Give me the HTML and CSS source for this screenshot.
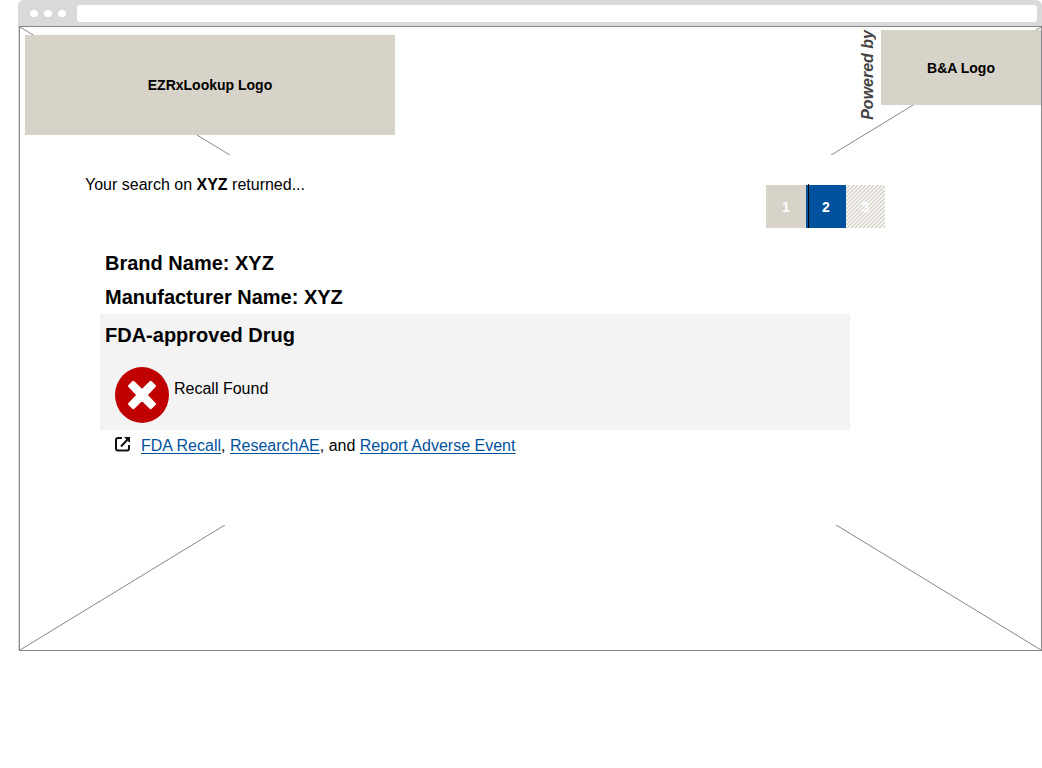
FILE: index.html
```html
<!DOCTYPE html>
<html lang="en">
<head>
<meta charset="utf-8">
<title>EZRxLookup</title>
<link rel="stylesheet" href="styles.css">
</head>
<body>
<div class="browser">
  <div class="browser-bar">
    <span class="dot"></span><span class="dot"></span><span class="dot"></span>
    <input class="address" type="text" aria-label="Address">
  </div>
  <div class="frame">
    <svg class="frame-cross" viewBox="0 0 1022 624" preserveAspectRatio="none" aria-hidden="true">
      <path d="M0 0L1022 624M1022 0L0 624"/>
    </svg>
    <header class="header">
      <div class="logo logo-main">EZRxLookup Logo</div>
      <div class="sponsor">
        <span class="powered">Powered by</span>
        <div class="logo logo-sponsor">B&amp;A Logo</div>
      </div>
    </header>
    <main class="main">
      <div class="search-row">
        <p class="summary">Your search on <b>XYZ</b> returned...</p>
        <nav class="pager" aria-label="Steps">
          <button class="step" type="button">1</button>
          <button class="step step-current" type="button" aria-current="step">2</button>
          <button class="step step-off" type="button">3</button>
        </nav>
      </div>
      <section class="result">
        <h2 class="field">Brand Name: XYZ</h2>
        <h2 class="field">Manufacturer Name: XYZ</h2>
        <div class="status">
          <h2 class="status-title">FDA-approved Drug</h2>
          <div class="status-row">
            <svg class="status-icon" viewBox="0 0 54 56" aria-hidden="true">
              <ellipse cx="27" cy="28" rx="27" ry="28" fill="#c00000"/>
              <path d="M18.300 14.700L27 23.300L35.700 14.700L40 19L31.500 28L40 37L35.700 41.300L27 32.700L18.300 41.300L14 37L22.500 28L14 19Z" fill="#fff" stroke="#fff" stroke-width="2" stroke-linejoin="round"/>
            </svg>
            <span>Recall Found</span>
          </div>
        </div>
        <p class="links">
          <svg class="link-icon" viewBox="0 0 16 16" aria-hidden="true">
            <path d="M7 2H3Q1 2 1 4V12.500Q1 14.500 3 14.500H12Q14 14.500 14 12.500V9M6 10.500L13 3" fill="none" stroke="#111" stroke-width="2"/>
            <path d="M9 1H15V7Z" fill="#111"/>
          </svg>
          <span><a href="#recall">FDA Recall</a>, <a href="#research">ResearchAE</a>, and <a href="#report">Report Adverse Event</a></span>
        </p>
      </section>
    </main>
  </div>
</div>
</body>
</html>
```
FILE: styles.css
```css
* { box-sizing: border-box; }

body {
  margin: 0;
  background: #fff;
  color: #000;
  font: 16px/20px "Liberation Sans", Arial, sans-serif;
}

h2, p { margin: 0; }

.browser {
  margin-left: 18px;
  border-left: 1px solid #d9d9d9;
  border-radius: 6px 6px 0 0;
}

.browser-bar {
  display: flex;
  align-items: center;
  gap: 6px;
  height: 26px;
  margin-left: -1px;
  padding: 0 5px 0 12px;
  background: #d9d9d9;
  border-radius: 6px 6px 0 0;
}

.dot {
  width: 8px;
  height: 7px;
  border-radius: 50%;
  background: #fff;
}

.address {
  flex: 1;
  height: 17px;
  margin-left: 5px;
  padding: 0 6px;
  border: 0;
  border-radius: 3px;
  background: #fff;
}

.frame {
  position: relative;
  padding-bottom: 125px;
  border: 1px solid #868686;
}

.frame-cross {
  position: absolute;
  inset: 0;
  width: 100%;
  height: 100%;
}

.frame-cross path {
  fill: none;
  stroke: #868686;
  stroke-width: 1;
}

.header {
  position: relative;
  display: flex;
  justify-content: space-between;
  align-items: flex-start;
  height: 128px;
  padding: 3px 0 0 5px;
}

.logo {
  display: flex;
  align-items: center;
  justify-content: center;
  background: #d7d3c8;
  font-size: 14px;
  font-weight: bold;
}

.logo-main {
  width: 370px;
  height: 100px;
  margin-top: 5px;
}

.sponsor {
  display: flex;
  gap: 3px;
}

.powered {
  color: #444;
  font-style: italic;
  font-weight: bold;
  writing-mode: vertical-rl;
  transform: rotate(180deg);
}

.logo-sponsor {
  width: 160px;
  height: 75px;
}

.main {
  position: relative;
  min-height: 370px;
  padding: 20px 16px 0 65px;
  background: #fff;
}

.search-row {
  display: flex;
  justify-content: space-between;
  align-items: flex-start;
  max-width: 800px;
}

.pager {
  display: flex;
  margin-top: 10px;
}

.step {
  width: 40px;
  height: 43px;
  padding: 0;
  border: 0;
  background: #d7d3c8;
  color: #fff;
  font: bold 14px "Liberation Sans", Arial, sans-serif;
}

.step-current {
  position: relative;
  background: #00529f;
}

/* Divider that rises slightly above the pager */
.step-current::before {
  content: "";
  position: absolute;
  top: -1px;
  bottom: 0;
  left: 2px;
  width: 1px;
  background: #000;
}

.step-off {
  width: 39px;
  background: linear-gradient(135deg, #d7d3c8, #fff 25%, #d7d3c8 45% 55%, #fff 75%, #d7d3c8);
  background-size: 4px 4px;
}

.result {
  max-width: 765px;
  padding: 18px 0 0 15px;
}

.field {
  padding: 0 5px;
  font-size: 20px;
  line-height: 34px;
}

.status {
  padding: 8px 5px 7px;
  background: #f3f3f3;
}

.status-title {
  font-size: 20px;
  line-height: 26px;
}

.status-row {
  display: flex;
  gap: 5px;
  padding: 19px 10px 0;
  line-height: 44px;
}

.status-icon {
  width: 54px;
  height: 56px;
}

.links {
  display: flex;
  gap: 10px;
  padding: 6px 15px 0;
}

.link-icon {
  width: 16px;
  height: 16px;
}

.links a {
  color: #00529f;
  text-decoration: underline;
  text-decoration-skip-ink: none;
  text-underline-offset: 2px;
}
```
